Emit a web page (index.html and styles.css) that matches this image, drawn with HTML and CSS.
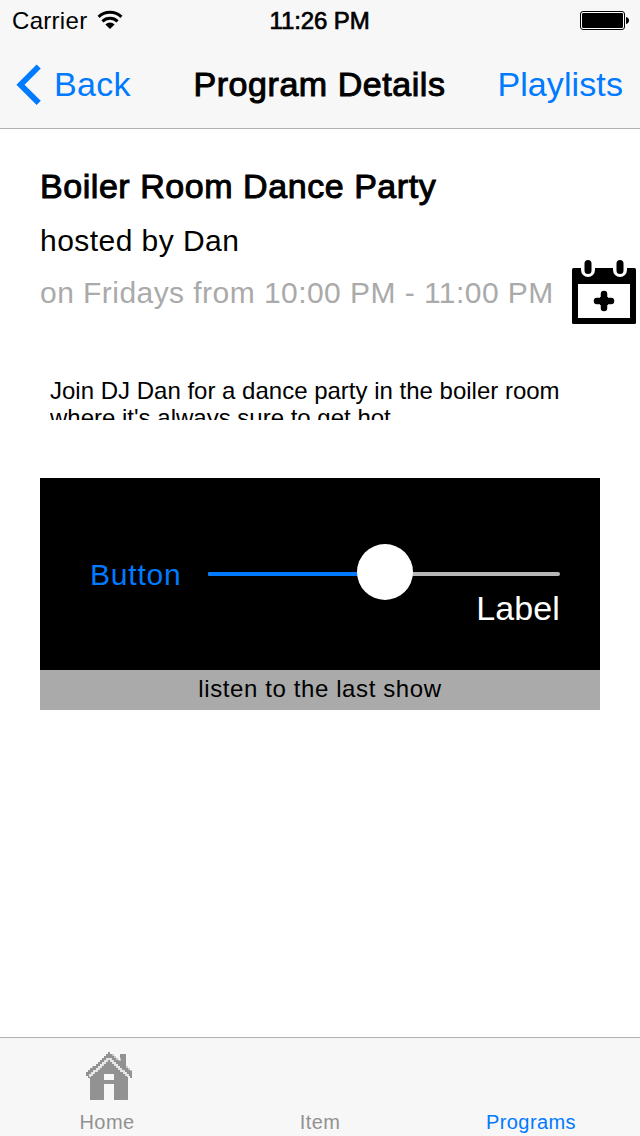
FILE: index.html
```
<!DOCTYPE html>
<html lang="en">
<head>
<meta charset="utf-8">
<title>Program Details</title>
<link rel="stylesheet" href="styles.css">
</head>
<body>
<header class="top">
  <div class="status">
    <div class="carrier"><span>Carrier</span>
      <svg class="wifi" width="26" height="20" viewBox="0 0 26 20"><g fill="none" stroke="#000" stroke-width="3"><path d="M1.600 6.800a16.600 16.600 0 0 1 22.800 0"/><path d="M5.400 11.300a11.200 11.200 0 0 1 15.200 0"/></g><path d="M13 19l-4.600-4.600a6.600 6.600 0 0 1 9.200 0z"/></svg>
    </div>
    <div class="time">11:26 PM</div>
    <svg class="battery" width="50" height="20" viewBox="0 0 50 20"><rect x=".5" y=".5" width="44" height="18" rx="2.500" fill="#fff" stroke="#000"/><rect x="2" y="2" width="41" height="15" rx="1.200"/><path d="M46 6c4 .5 4 6.500 0 7z"/></svg>
  </div>
  <nav class="nav">
    <a class="back"><svg width="25" height="42" viewBox="0 0 25 42"><path d="M22.700 2.500L4.500 20.700l18.200 18.200" fill="none" stroke="#007aff" stroke-width="5.800"/></svg><span>Back</span></a>
    <h1 class="title">Program Details</h1>
    <a class="playlists">Playlists</a>
  </nav>
</header>
<main class="content">
  <h2 class="name">Boiler Room Dance Party</h2>
  <p class="host">hosted by Dan</p>
  <div class="schedule">
    <p class="when">on Fridays from 10:00 PM - 11:00 PM</p>
    <svg class="calendar" width="64" height="64" viewBox="0 0 64 64">
      <rect y="8" width="64" height="56" rx="1.500"/>
      <rect x="6" y="24" width="52" height="34" fill="#fff"/>
      <path d="M9 7v3a7 7 0 0 0 14 0V7zM41 7v3a7 7 0 0 0 14 0V7z" fill="#fff"/>
      <path d="M16 3.500v7M48 3.500v7" stroke="#000" stroke-width="7" stroke-linecap="round"/>
      <path d="M25 41h14M32 34v14" stroke="#000" stroke-width="6.500" stroke-linecap="round"/>
      <path d="M28 37h8v8h-8z"/>
    </svg>
  </div>
  <p class="about">Join DJ Dan for a dance party in the boiler room<br>where it's always sure to get hot</p>
  <section class="player">
    <div class="controls">
      <button class="play">Button</button>
      <div class="seek">
        <div class="track"><i class="fill"></i><i class="knob"></i></div>
        <div class="label">Label</div>
      </div>
    </div>
    <div class="caption">listen to the last show</div>
  </section>
</main>
<footer class="tabs">
  <a class="tab home"><svg width="46" height="48" viewBox="0 0 46 48">
    <path fill="#929292" d="M34 2h6v14h-6zM4 24L23 6l19 18v24H28V32H18v16H4z"/>
    <path fill="#929292" d="M22 0h2v2h4v2h2v2h2v2h2v2h2v2h4v2h2v2h2v2h2v2h2v4h-2v2h-2v-2h-2v-2h-2v-2h-2v-2h-2v-2h-2v-2h-2v-2h-2v-2h-4V8h-6v2h-4v2h-2v2h-2v2h-2v2h-2v2H8v2H6v2H4v2H2v-2H0v-4h2v-2h2v-2h2v-2h4v-2h2v-2h2V8h2V6h2V4h2V2h2z"/>
    <path d="M4 25v-2h2v-2h2v-2h3v-2h2v-2h2v-2h2v-2h2V9h2V7h4v2h2v2h2v2h2v2h2v2h2v2h3v2h2v2h2v2" fill="none" stroke="#e8e8e8" stroke-width="1.800"/>
    <path d="M1 19v-2h2v-2h3v-2h2v-2h2V9h2V7h3V5h2V3h2V1h2M45 19v-2h-2v-2h-3M34 9V7h-3V5h-2V3h-2V1h-2" fill="none" stroke="#f7f7f7" stroke-width="1.800" opacity=".55"/>
    <path d="M18 22h10v6H18z" fill="#f7f7f7"/></svg><span>Home</span></a>
  <a class="tab"><span>Item</span></a>
  <a class="tab active"><span>Programs</span></a>
</footer>
</body>
</html>
```
FILE: styles.css
```
* { box-sizing: border-box; margin: 0; padding: 0; }
body {
  width: 640px; height: 1136px; overflow: hidden;
  display: flex; flex-direction: column;
  background: #fff; color: #000;
  font-family: "Liberation Sans", Arial, sans-serif; font-weight: 400;
}
svg { display: block; flex: none; }
.top { height: 129px; background: #f7f7f7; border-bottom: 1px solid #b2b2b2; }
.status {
  height: 40px; padding: 0 10px 0 12px;
  display: grid; grid-template-columns: 1fr auto 1fr;
  font-size: 24px; line-height: 42px; white-space: nowrap;
}
.carrier { display: flex; letter-spacing: .3px; }
.wifi { margin: 10px 0 0 10px; }
.time { margin-left: -3px; letter-spacing: -.1px; -webkit-text-stroke: .7px #000; }
.battery { justify-self: end; margin-top: 11px; }
.nav {
  height: 88px; padding: 0 17px 0 16px;
  display: grid; grid-template-columns: 1fr auto 1fr;
  font-size: 34px; line-height: 88px; white-space: nowrap;
}
.back, .playlists { color: #007aff; }
.back { display: flex; gap: 13px; letter-spacing: .3px; }
.back svg { margin-top: 24px; }
.title { font-size: 34px; font-weight: 400; letter-spacing: .55px; -webkit-text-stroke: 1px #000; }
.playlists { text-align: right; letter-spacing: .1px; }
.content { flex: 1; padding: 37px 0 0 40px; }
.name { font-size: 34px; line-height: 40px; font-weight: 400; letter-spacing: .55px; -webkit-text-stroke: 1px #000; }
.host { margin-top: 17px; font-size: 30px; line-height: 36px; letter-spacing: .45px; }
.schedule { height: 64px; margin-top: 1px; display: flex; justify-content: space-between; padding-right: 4px; }
.when { font-size: 30px; line-height: 66px; letter-spacing: .45px; color: #aaa; white-space: nowrap; }
.about {
  height: 44px; margin: 52px 40px 0 10px; padding-top: 1px; overflow: hidden;
  font-size: 24px; line-height: 27px; white-space: nowrap;
}
.player { width: 560px; margin-top: 58px; background: #000; }
.controls { height: 192px; padding: 0 40px 0 50px; display: flex; justify-content: space-between; }
.play { border: 0; background: none; color: #007aff; font: inherit; font-size: 30px; letter-spacing: .8px; height: 194px; line-height: 194px; }
.seek { width: 352px; padding-top: 94px; }
.track { position: relative; height: 4px; border-radius: 2px; background: #b7b7b7; }
.fill { display: block; width: 170px; height: 4px; border-radius: 2px; background: #007aff; }
.knob { position: absolute; left: 149px; top: -28px; width: 56px; height: 56px; border-radius: 50%; background: #fff; }
.label { margin-top: 12px; font-size: 34px; line-height: 40px; letter-spacing: .1px; text-align: right; color: #fff; }
.caption { height: 40px; background: #aaa; font-size: 24px; line-height: 38px; letter-spacing: .6px; text-align: center; }
.tabs {
  height: 99px; padding: 0 2px; border-top: 1px solid #b2b2b2; background: #f7f7f7; color: #929292;
  display: grid; grid-template-columns: 210px 216px 206px;
}
.tab { display: flex; flex-direction: column; align-items: center; justify-content: flex-end; font-size: 20px; line-height: 24px; letter-spacing: .4px; padding-bottom: 2px; }
.tab svg { margin: 0 0 10px 4px; }
.active { color: #007aff; }
```
